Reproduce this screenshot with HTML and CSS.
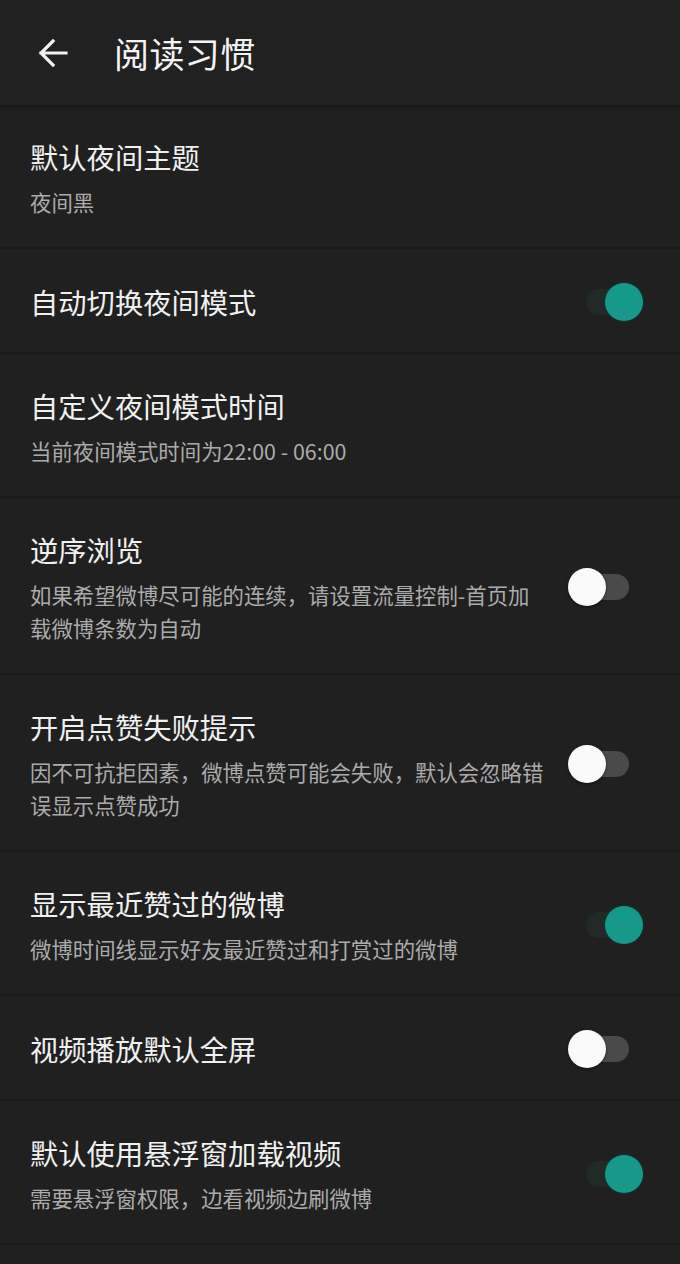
FILE: index.html
```html
<!DOCTYPE html>
<html lang="zh-CN">
<head>
<meta charset="utf-8">
<title>阅读习惯</title>
<link rel="stylesheet" href="styles.css">
</head>
<body>
<div class="app">
  <header class="topbar">
    <svg class="back" width="32" height="32" viewBox="0 0 32 32" aria-hidden="true">
      <path d="M29 16H4M16 4L4 16l12 12" fill="none" stroke="#f2f2f2" stroke-width="3.2" stroke-linecap="square" stroke-linejoin="miter"/>
    </svg>
    <h1 class="title">阅读习惯</h1>
  </header>
  <main class="list">
    <div class="row">
      <div class="text">
        <div class="t">默认夜间主题</div>
        <div class="s">夜间黑</div>
      </div>
    </div>
    <div class="row">
      <div class="text">
        <div class="t">自动切换夜间模式</div>
      </div>
      <div class="switch on"><span class="track"></span><span class="knob"></span></div>
    </div>
    <div class="row">
      <div class="text">
        <div class="t">自定义夜间模式时间</div>
        <div class="s">当前夜间模式时间为22:00 - 06:00</div>
      </div>
    </div>
    <div class="row">
      <div class="text">
        <div class="t">逆序浏览</div>
        <div class="s">如果希望微博尽可能的连续，请设置流量控制-首页加<br>载微博条数为自动</div>
      </div>
      <div class="switch"><span class="track"></span><span class="knob"></span></div>
    </div>
    <div class="row">
      <div class="text">
        <div class="t">开启点赞失败提示</div>
        <div class="s">因不可抗拒因素，微博点赞可能会失败，默认会忽略错<br>误显示点赞成功</div>
      </div>
      <div class="switch"><span class="track"></span><span class="knob"></span></div>
    </div>
    <div class="row">
      <div class="text">
        <div class="t">显示最近赞过的微博</div>
        <div class="s">微博时间线显示好友最近赞过和打赏过的微博</div>
      </div>
      <div class="switch on"><span class="track"></span><span class="knob"></span></div>
    </div>
    <div class="row">
      <div class="text">
        <div class="t">视频播放默认全屏</div>
      </div>
      <div class="switch"><span class="track"></span><span class="knob"></span></div>
    </div>
    <div class="row">
      <div class="text">
        <div class="t">默认使用悬浮窗加载视频</div>
        <div class="s">需要悬浮窗权限，边看视频边刷微博</div>
      </div>
      <div class="switch on"><span class="track"></span><span class="knob"></span></div>
    </div>
    <div class="row"></div>
  </main>
</div>
</body>
</html>
```

FILE: styles.css
```css
* { box-sizing: border-box; }
html, body {
  margin: 0;
  padding: 0;
  background: #202020;
}
body {
  font-family: "Noto Sans CJK SC", "Noto Sans", sans-serif;
  color: #efefef;
  width: 680px;
  height: 1264px;
  overflow: hidden;
}
.app {
  display: flex;
  flex-direction: column;
}
.topbar {
  height: 105px;
  background: #212121;
  display: flex;
  align-items: center;
  padding-left: 37px;
  box-shadow: 0 1px 4px rgba(0, 0, 0, 0.45);
  position: relative;
  z-index: 1;
}
.back {
  display: block;
  margin-top: 1px;
}
.title {
  margin: 0 0 0 45px;
  font-size: 35px;
  font-weight: 400;
  line-height: 40px;
  color: #f4f4f4;
  letter-spacing: 0.4px;
}
.list {
  display: flex;
  flex-direction: column;
}
.row {
  display: flex;
  align-items: center;
  justify-content: space-between;
  padding: 32px 36px 29px 30px;
  border-bottom: 2px solid #1a1a1a;
  min-height: 105px;
}
.text {
  display: flex;
  flex-direction: column;
  gap: 8px;
}
.t {
  font-size: 28.3px;
  line-height: 40px;
  color: #f0f0f0;
}
.s {
  font-size: 21.4px;
  line-height: 33px;
  color: #ababab;
  white-space: nowrap;
}
.switch {
  position: relative;
  width: 76px;
  height: 40px;
  flex: none;
}
.track {
  position: absolute;
  left: 7px;
  top: 7px;
  width: 54px;
  height: 26px;
  border-radius: 13px;
  background: #4a4a4a;
}
.knob {
  position: absolute;
  left: 0;
  top: 1px;
  width: 38px;
  height: 38px;
  border-radius: 50%;
  background: #fafafa;
  box-shadow: 0 1px 3px rgba(0, 0, 0, 0.5);
}
.switch.on .track {
  left: 18px;
  background: #222a28;
}
.switch.on .knob {
  left: 37px;
  background: #17998a;
  box-shadow: 0 0 2px 1px rgba(10, 60, 55, 0.6);
}
```
